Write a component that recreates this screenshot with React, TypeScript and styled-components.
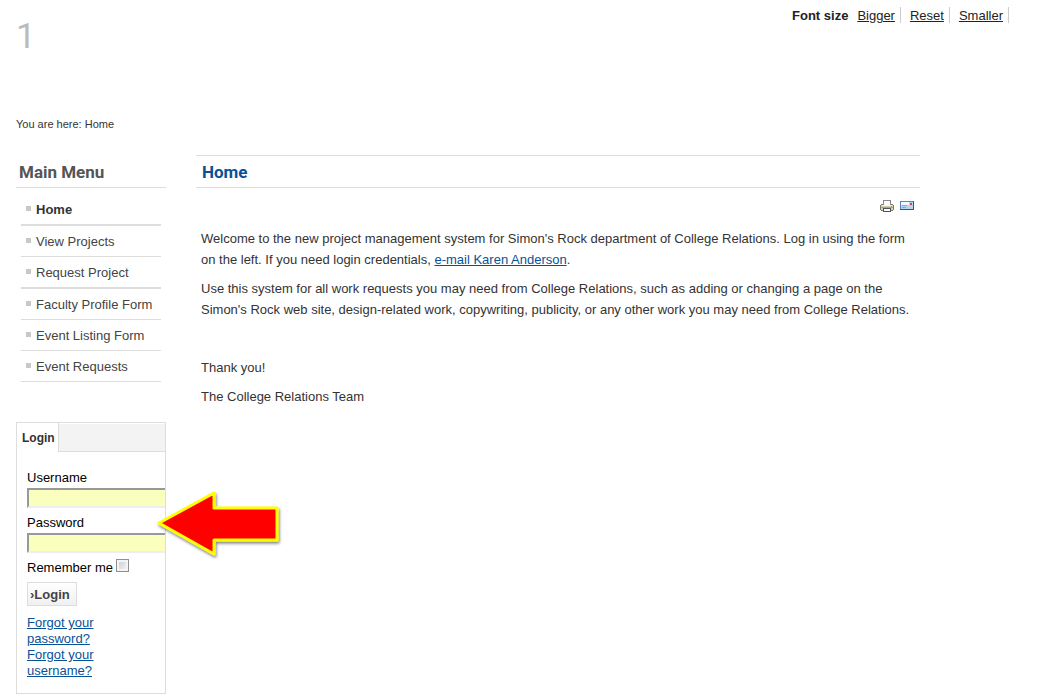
import React from "react";
import styled, { createGlobalStyle } from "styled-components";

const GlobalStyle = createGlobalStyle`
  * { box-sizing: border-box; }
  body {
    margin: 0;
    background: #fff;
    color: #333;
    font: 13px/21px "Liberation Sans", Arial, sans-serif;
  }
`;

const Page = styled.div`
  display: flex;
  flex-direction: column;
`;

const Header = styled.header`
  display: flex;
  justify-content: space-between;
  align-items: flex-start;
  height: 116px;
  padding: 7px 42px 0 16px;
`;

const Logo = styled.div`
  padding-top: 6px;
  color: #bbb;
  font: 35px/48px Roboto, "Open Sans", sans-serif;
`;

const FontSizer = styled.nav`
  display: flex;
  gap: 9px;
  color: #222;
  line-height: 15px;
`;

const SizeLabel = styled.strong`
  padding-top: 1px;
`;

const SizeLink = styled.a`
  padding: 1px 5px 0 0;
  border-right: 1px solid #ccc;
  color: #222;
`;

const Breadcrumbs = styled.div`
  padding: 0 16px;
  font-size: 11px;
  line-height: 16px;
`;

const Columns = styled.div`
  display: flex;
  align-items: flex-start;
  gap: 30px;
  padding: 23px 131px 0 16px;
`;

const Sidebar = styled.aside`
  display: flex;
  flex: 0 0 150px;
  flex-direction: column;
  gap: 40px;
  min-width: 0;
`;

const Heading = styled.h2<{ $main?: boolean }>`
  margin: 0;
  padding: ${(p) => (p.$main ? "2px 6px 0" : "2px 3px 0")};
  border-top: 1px solid ${(p) => (p.$main ? "#ddd" : "transparent")};
  border-bottom: 1px solid #ddd;
  color: ${(p) => (p.$main ? "#095197" : "#555")};
  font: bold 17px/29px Roboto, "Open Sans", sans-serif;
`;

const Menu = styled.ul`
  margin: 0;
  padding: 6px 5px 0;
  list-style: none;
`;

const MenuItem = styled.li<{ $thick?: boolean }>`
  display: flex;
  align-items: center;
  gap: 5px;
  height: ${(p) => (p.$thick ? 32 : 31)}px;
  padding-left: 5px;
  border-bottom: ${(p) => (p.$thick ? 2 : 1)}px solid #ddd;

  &::before {
    content: "";
    width: 5px;
    height: 5px;
    margin-bottom: 2px;
    background: #c8c8c8;
  }
`;

const MenuLink = styled.a<{ $active?: boolean }>`
  color: ${(p) => (p.$active ? "#333" : "#444")};
  font-weight: ${(p) => (p.$active ? "bold" : "normal")};
  text-decoration: none;
  white-space: nowrap;
`;

const LoginWrap = styled.section`
  position: relative;
`;

const LoginBox = styled.div`
  overflow: hidden;
  border: 1px solid #ddd;
`;

const TabBar = styled.div`
  display: flex;
  height: 29px;
  background: #f3f3f3;
  box-shadow: inset 0 1px #fff, inset 0 -1px #ddd;
`;

const Tab = styled.h3`
  margin: 0;
  padding: 1px 3px 0 5px;
  border-right: 1px solid #ddd;
  background: #fff;
  color: #333;
  font-size: 12px;
  line-height: 28px;
`;

const Form = styled.form`
  display: flex;
  flex-direction: column;
  align-items: flex-start;
  padding: 16px 10px 14px;
  color: #000;
  line-height: 19px;
`;

const FieldLabel = styled.label`
  margin-bottom: 1px;
`;

const Field = styled.input`
  width: 160px;
  height: 20px;
  margin: 0 0 5px;
  padding: 1px;
  border: 2px solid #999;
  border-bottom-color: #eee;
  border-radius: 0;
  background: #faffbd;
`;

const Remember = styled.label`
  display: flex;
  align-items: center;
  gap: 3px;
`;

const Check = styled.input`
  appearance: none;
  width: 13px;
  height: 13px;
  margin: 0 0 4px;
  border: 1px solid #8e8f8f;
  background: linear-gradient(135deg, #c8cdd2, #f6f6f6);
  box-shadow: inset 0 0 0 2px #f4f4f4;

  &:checked { background: #4b7db5; }
`;

const Submit = styled.button`
  height: 24px;
  margin: 5px 0 9px;
  padding: 1px 6px 0 2px;
  border: 1px solid #ddd;
  background: linear-gradient(#fff, #f0f0f0);
  color: #444;
  font: bold 13px/21px "Liberation Sans", Arial, sans-serif;
`;

const HelpLinks = styled.div`
  display: flex;
  flex-direction: column;
  width: 80px;
  line-height: 16px;
`;

const TextLink = styled.a`
  color: #095197;
`;

const Arrow = styled.svg`
  position: absolute;
  top: 66px;
  left: 138px;
`;

const Content = styled.main`
  flex: 1;
  min-width: 0;
`;

const Tools = styled.div`
  display: flex;
  justify-content: flex-end;
  gap: 6px;
  height: 40px;
  padding: 12px 6px 0;
`;

const Tool = styled.a`
  display: block;
  height: 14px;

  svg { display: block; }
`;

const Paragraph = styled.p`
  margin: 0 0 8px;
  padding: 0 5px;
  min-height: 21px;
`;

const menu = ["Home", "View Projects", "Request Project", "Faculty Profile Form", "Event Listing Form", "Event Requests"];

const PrinterIcon = () => (
  <svg width="14" height="14" viewBox="0 0 14 14" shapeRendering="crispEdges" aria-hidden="true">
    <path d="M3 0h8v6H3z" fill="#888" />
    <path d="M4 1h6v5H4z" fill="#fff" />
    <path d="M1 4h2v1h8V4h2v1h1v5h-1v1H1v-1H0V5h1z" fill="#7d7a66" />
    <path d="M1 5h12v5H1z" fill="#d6d2b5" />
    <path d="M2 5h10v1H2z" fill="#f5f2dc" />
    <path d="M1 7h12v1H1z" fill="#a8a48a" />
    <path d="M3 8h8v4H3z" fill="#555" />
    <path d="M4 9h6v2H4z" fill="#fff" />
    <path d="M11 6h1v1h-1z" fill="#7da557" />
  </svg>
);

const MailIcon = () => (
  <svg width="14" height="14" viewBox="0 0 14 14" shapeRendering="crispEdges" aria-hidden="true">
    <path d="M0 1h14v9H0z" fill="#5387c5" />
    <path d="M0 9h14v1H0zM13 1h1v9h-1z" fill="#285899" />
    <path d="M1 2h12v7H1z" fill="#b5d4f6" />
    <path d="M1 2h8v3H1z" fill="#f6faff" />
    <path d="M2 5h5v1H2zM2 7h4v1H2z" fill="#82a9d8" />
    <path d="M10 3h2v2h-2z" fill="#df3d32" />
  </svg>
);

export default function App() {
  return (
    <>
      <GlobalStyle />
      <Page>
        <Header>
          <Logo>1</Logo>
          <FontSizer aria-label="Font size">
            <SizeLabel>Font size</SizeLabel>
            <SizeLink href="#bigger">Bigger</SizeLink>
            <SizeLink href="#reset">Reset</SizeLink>
            <SizeLink href="#smaller">Smaller</SizeLink>
          </FontSizer>
        </Header>
        <Breadcrumbs>You are here: Home</Breadcrumbs>
        <Columns>
          <Sidebar>
            <nav>
              <Heading>Main Menu</Heading>
              <Menu>
                {menu.map((label, i) => (
                  <MenuItem key={label} $thick={i === 0 || i === 2}>
                    <MenuLink href="#menu" $active={i === 0}>{label}</MenuLink>
                  </MenuItem>
                ))}
              </Menu>
            </nav>
            <LoginWrap>
              <LoginBox>
                <TabBar><Tab>Login</Tab></TabBar>
                <Form onSubmit={(e) => e.preventDefault()}>
                  <FieldLabel htmlFor="username">Username</FieldLabel>
                  <Field id="username" type="text" />
                  <FieldLabel htmlFor="password">Password</FieldLabel>
                  <Field id="password" type="password" />
                  <Remember>Remember me <Check type="checkbox" /></Remember>
                  <Submit type="submit">›Login</Submit>
                  <HelpLinks>
                    <TextLink href="#password">Forgot your password?</TextLink>
                    <TextLink href="#username">Forgot your username?</TextLink>
                  </HelpLinks>
                </Form>
              </LoginBox>
              <Arrow width="130" height="72" viewBox="0 0 130 72" aria-hidden="true">
                <defs>
                  <filter id="arrow-shadow" x="-10%" y="-10%" width="120%" height="130%">
                    <feDropShadow dx="1" dy="2" stdDeviation="1.5" floodColor="#000" floodOpacity="0.5" />
                  </filter>
                </defs>
                <path
                  d="M5 35 60 5V20H123V52H60V66Z"
                  fill="#f00"
                  stroke="#ff0"
                  strokeWidth="3"
                  strokeLinejoin="round"
                  filter="url(#arrow-shadow)"
                />
              </Arrow>
            </LoginWrap>
          </Sidebar>
          <Content>
            <Heading as="h1" $main>Home</Heading>
            <Tools>
              <Tool href="#print" aria-label="Print"><PrinterIcon /></Tool>
              <Tool href="#email" aria-label="E-mail"><MailIcon /></Tool>
            </Tools>
            <Paragraph>
              Welcome to the new project management system for Simon's Rock department of College Relations. Log in using the form
              on the left. If you need login credentials, <TextLink href="#karen">e-mail Karen Anderson</TextLink>.
            </Paragraph>
            <Paragraph>
              Use this system for all work requests you may need from College Relations, such as adding or changing a page on the
              Simon's Rock web site, design-related work, copywriting, publicity, or any other work you may need from College Relations.
            </Paragraph>
            <Paragraph />
            <Paragraph>Thank you!</Paragraph>
            <Paragraph>The College Relations Team</Paragraph>
          </Content>
        </Columns>
      </Page>
    </>
  );
}
